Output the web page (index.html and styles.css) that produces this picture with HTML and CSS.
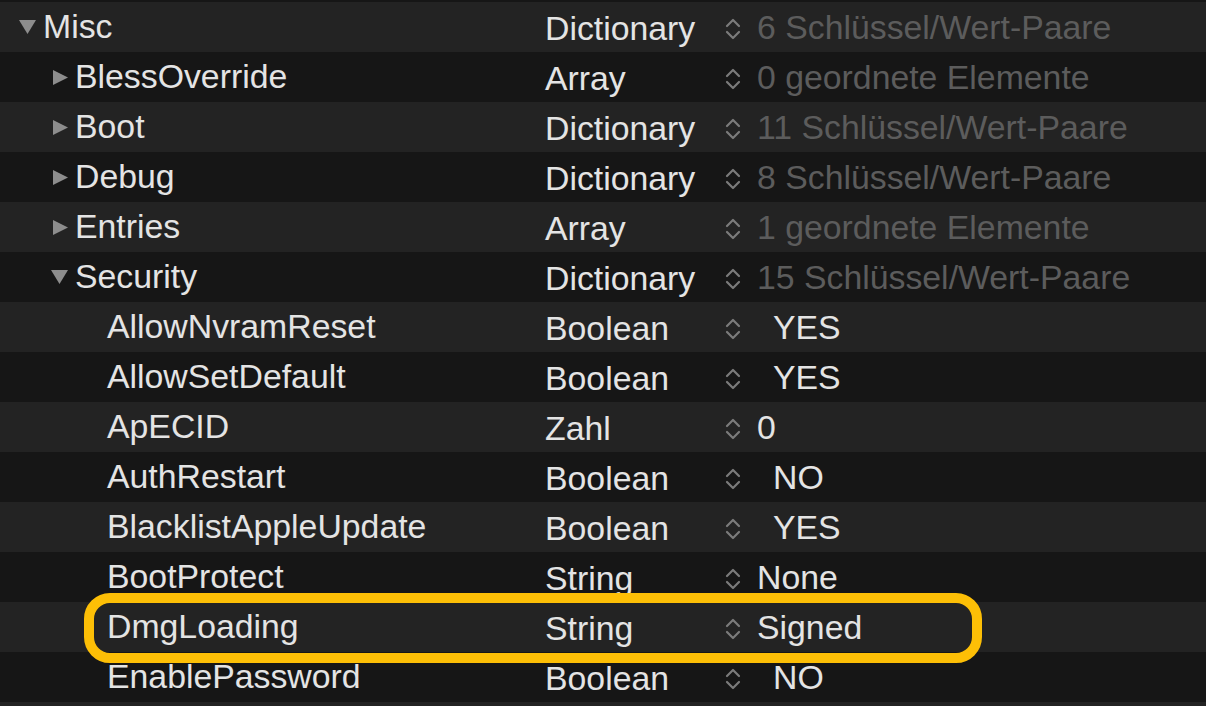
FILE: index.html
```html
<!DOCTYPE html>
<html>
<head>
<meta charset="utf-8">
<link rel="stylesheet" href="styles.css">
</head>
<body>
<div class="table">
  <div class="row light">
    <div class="name lvl0"><span class="tog"><svg width="17" height="14" viewBox="0 0 17 14"><polygon points="0,0 17,0 8.5,14" /></svg></span>Misc</div>
    <div class="type">Dictionary</div>
    <div class="step"><svg width="16" height="24" viewBox="0 0 16 24"><path d="M2 9 L8 3 L14 9 M2 15 L8 21 L14 15"/></svg></div>
    <div class="val dim">6 Schlüssel/Wert-Paare</div>
  </div>
  <div class="row dark">
    <div class="name lvl1"><span class="tog"><svg width="15" height="15" viewBox="0 0 15 15"><polygon points="0,0 15,7.5 0,15" /></svg></span>BlessOverride</div>
    <div class="type">Array</div>
    <div class="step"><svg width="16" height="24" viewBox="0 0 16 24"><path d="M2 9 L8 3 L14 9 M2 15 L8 21 L14 15"/></svg></div>
    <div class="val dim">0 geordnete Elemente</div>
  </div>
  <div class="row light">
    <div class="name lvl1"><span class="tog"><svg width="15" height="15" viewBox="0 0 15 15"><polygon points="0,0 15,7.5 0,15" /></svg></span>Boot</div>
    <div class="type">Dictionary</div>
    <div class="step"><svg width="16" height="24" viewBox="0 0 16 24"><path d="M2 9 L8 3 L14 9 M2 15 L8 21 L14 15"/></svg></div>
    <div class="val dim">11 Schlüssel/Wert-Paare</div>
  </div>
  <div class="row dark">
    <div class="name lvl1"><span class="tog"><svg width="15" height="15" viewBox="0 0 15 15"><polygon points="0,0 15,7.5 0,15" /></svg></span>Debug</div>
    <div class="type">Dictionary</div>
    <div class="step"><svg width="16" height="24" viewBox="0 0 16 24"><path d="M2 9 L8 3 L14 9 M2 15 L8 21 L14 15"/></svg></div>
    <div class="val dim">8 Schlüssel/Wert-Paare</div>
  </div>
  <div class="row light">
    <div class="name lvl1"><span class="tog"><svg width="15" height="15" viewBox="0 0 15 15"><polygon points="0,0 15,7.5 0,15" /></svg></span>Entries</div>
    <div class="type">Array</div>
    <div class="step"><svg width="16" height="24" viewBox="0 0 16 24"><path d="M2 9 L8 3 L14 9 M2 15 L8 21 L14 15"/></svg></div>
    <div class="val dim">1 geordnete Elemente</div>
  </div>
  <div class="row dark">
    <div class="name lvl1"><span class="tog down"><svg width="17" height="14" viewBox="0 0 17 14"><polygon points="0,0 17,0 8.5,14" /></svg></span>Security</div>
    <div class="type">Dictionary</div>
    <div class="step"><svg width="16" height="24" viewBox="0 0 16 24"><path d="M2 9 L8 3 L14 9 M2 15 L8 21 L14 15"/></svg></div>
    <div class="val dim">15 Schlüssel/Wert-Paare</div>
  </div>
  <div class="row light">
    <div class="name lvl2">AllowNvramReset</div>
    <div class="type">Boolean</div>
    <div class="step"><svg width="16" height="24" viewBox="0 0 16 24"><path d="M2 9 L8 3 L14 9 M2 15 L8 21 L14 15"/></svg></div>
    <div class="val bool">YES</div>
  </div>
  <div class="row dark">
    <div class="name lvl2">AllowSetDefault</div>
    <div class="type">Boolean</div>
    <div class="step"><svg width="16" height="24" viewBox="0 0 16 24"><path d="M2 9 L8 3 L14 9 M2 15 L8 21 L14 15"/></svg></div>
    <div class="val bool">YES</div>
  </div>
  <div class="row light">
    <div class="name lvl2">ApECID</div>
    <div class="type">Zahl</div>
    <div class="step"><svg width="16" height="24" viewBox="0 0 16 24"><path d="M2 9 L8 3 L14 9 M2 15 L8 21 L14 15"/></svg></div>
    <div class="val">0</div>
  </div>
  <div class="row dark">
    <div class="name lvl2">AuthRestart</div>
    <div class="type">Boolean</div>
    <div class="step"><svg width="16" height="24" viewBox="0 0 16 24"><path d="M2 9 L8 3 L14 9 M2 15 L8 21 L14 15"/></svg></div>
    <div class="val bool">NO</div>
  </div>
  <div class="row light">
    <div class="name lvl2">BlacklistAppleUpdate</div>
    <div class="type">Boolean</div>
    <div class="step"><svg width="16" height="24" viewBox="0 0 16 24"><path d="M2 9 L8 3 L14 9 M2 15 L8 21 L14 15"/></svg></div>
    <div class="val bool">YES</div>
  </div>
  <div class="row dark">
    <div class="name lvl2">BootProtect</div>
    <div class="type">String</div>
    <div class="step"><svg width="16" height="24" viewBox="0 0 16 24"><path d="M2 9 L8 3 L14 9 M2 15 L8 21 L14 15"/></svg></div>
    <div class="val">None</div>
  </div>
  <div class="row light">
    <div class="name lvl2">DmgLoading</div>
    <div class="type">String</div>
    <div class="step"><svg width="16" height="24" viewBox="0 0 16 24"><path d="M2 9 L8 3 L14 9 M2 15 L8 21 L14 15"/></svg></div>
    <div class="val">Signed</div>
    <div class="ring"></div>
  </div>
  <div class="row dark">
    <div class="name lvl2">EnablePassword</div>
    <div class="type">Boolean</div>
    <div class="step"><svg width="16" height="24" viewBox="0 0 16 24"><path d="M2 9 L8 3 L14 9 M2 15 L8 21 L14 15"/></svg></div>
    <div class="val bool">NO</div>
  </div>
  <div class="tail light"></div>
</div>
</body>
</html>
```

FILE: styles.css
```css
html, body {
  margin: 0;
  padding: 0;
  background: #161616;
  overflow: hidden;
}
.table {
  padding-top: 2px;
  font-family: "Liberation Sans", Arial, sans-serif;
  font-size: 33.8px;
  color: #e4e4e4;
}
.row {
  display: flex;
  align-items: center;
  height: 50px;
  position: relative;
}
.tail { height: 4px; }
.light { background: #232323; }
.dark { background: #161616; }
.name {
  width: 545px;
  flex: none;
  display: flex;
  align-items: center;
  box-sizing: border-box;
  white-space: nowrap;
  margin-top: -1px;
}
.lvl0 { padding-left: 19px; }
.lvl1 { padding-left: 51px; }
.lvl2 { padding-left: 107px; }
.tog {
  width: 24px;
  flex: none;
  display: flex;
  align-items: center;
  margin-top: 1px;
}
.lvl1 .tog { padding-left: 2px; width: 22px; }
.lvl1 .tog.down { padding-left: 0; width: 24px; }
.tog svg { fill: #8d8d8d; display: block; }
.type {
  width: 180px;
  flex: none;
  margin-top: 3px;
  white-space: nowrap;
}
.step {
  width: 16px;
  flex: none;
  display: flex;
  align-items: center;
  margin-top: 3px;
}
.step svg { display: block; }
.step path {
  fill: none;
  stroke: #7b7b7b;
  stroke-width: 2.2;
  stroke-linecap: round;
  stroke-linejoin: round;
}
.val {
  padding-left: 16px;
  margin-top: 1px;
  white-space: nowrap;
}
.val.bool { padding-left: 32px; }
.val.dim { color: #5c5c5c; }
.ring {
  position: absolute;
  z-index: 2;
  left: 84px;
  top: -9px;
  width: 898px;
  height: 70px;
  box-sizing: border-box;
  border: 10px solid #fdbf06;
  border-radius: 26px;
  pointer-events: none;
}
```
